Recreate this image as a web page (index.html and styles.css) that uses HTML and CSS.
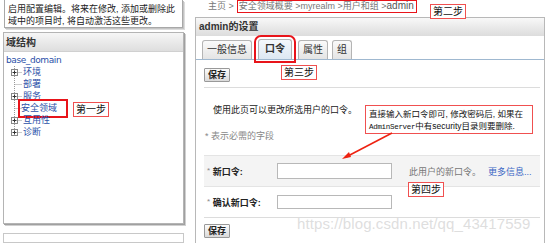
FILE: index.html
```html
<!DOCTYPE html>
<html lang="zh">
<head>
<meta charset="utf-8">
<link rel="stylesheet" href="styles.css">
</head>
<body>
<div class="page">
  <aside class="left">
    <div class="notice">启用配置编辑。将来在修改, 添加或删除此<br>域中的项目时, 将自动激活这些更改。</div>
    <div class="tree-panel">
      <div class="tp-head">域结构</div>
      <div class="tree">
        <div class="root">base_domain</div>
        <ul>
          <li><svg class="conn" width="15" height="12" viewBox="0 0 15 12"><path d="M7.5 0V12M7.5 6.5H15" stroke="#999" stroke-dasharray="1 1"/><rect x="4.5" y="3.5" width="6" height="6" fill="#fff" stroke="#888"/><path d="M5.5 6.5H9.5M7.5 4.5V8.5" stroke="#333"/></svg><a>环境</a></li>
          <li><svg class="conn" width="15" height="12" viewBox="0 0 15 12"><path d="M7.5 0V12M7.5 6.5H15" stroke="#999" stroke-dasharray="1 1"/></svg><a>部署</a></li>
          <li><svg class="conn" width="15" height="12" viewBox="0 0 15 12"><path d="M7.5 0V12M7.5 6.5H15" stroke="#999" stroke-dasharray="1 1"/><rect x="4.5" y="3.5" width="6" height="6" fill="#fff" stroke="#888"/><path d="M5.5 6.5H9.5M7.5 4.5V8.5" stroke="#333"/></svg><a>服务</a></li>
          <li><svg class="conn" width="15" height="12" viewBox="0 0 15 12"><path d="M7.5 0V12M7.5 6.5H15" stroke="#999" stroke-dasharray="1 1"/></svg><a class="mark">安全领域</a></li>
          <li><svg class="conn" width="15" height="12" viewBox="0 0 15 12"><path d="M7.5 0V12M7.5 6.5H15" stroke="#999" stroke-dasharray="1 1"/><rect x="4.5" y="3.5" width="6" height="6" fill="#fff" stroke="#888"/><path d="M5.5 6.5H9.5M7.5 4.5V8.5" stroke="#333"/></svg><a>互用性</a></li>
          <li><svg class="conn" width="15" height="12" viewBox="0 0 15 12"><path d="M7.5 0V6.5M7.5 6.5H15" stroke="#999" stroke-dasharray="1 1"/><rect x="4.5" y="3.5" width="6" height="6" fill="#fff" stroke="#888"/><path d="M5.5 6.5H9.5M7.5 4.5V8.5" stroke="#333"/></svg><a>诊断</a></li>
        </ul>
      </div>
    </div>
    <div class="next-panel"></div>
  </aside>

  <main class="right">
    <div class="crumbs">主页 &gt;<span class="crumb-mark">安全领域概要 &gt;myrealm &gt;用户和组 &gt;<b>admin</b></span></div>
    <section class="panel">
      <div class="p-head">admin的设置</div>
      <div class="tabs">
        <span class="tab">一般信息</span>
        <span class="tab active">口令</span>
        <span class="tab">属性</span>
        <span class="tab">组</span>
      </div>
      <div class="content">
        <div class="bar"><button class="btn">保存</button></div>
        <p class="desc">使用此页可以更改所选用户的口令。</p>
        <p class="req">* 表示必需的字段</p>
        <div class="form">
          <div class="row shade">
            <label class="lbl"><span class="ast">*</span> 新口令:</label>
            <span class="input"></span>
            <span class="help">此用户的新口令。</span>
            <a class="more">更多信息...</a>
          </div>
          <div class="row">
            <label class="lbl"><span class="ast">*</span> 确认新口令:</label>
            <span class="input small"></span>
          </div>
        </div>
        <div class="bar bottom"><button class="btn">保存</button></div>
      </div>
    </section>
  </main>

  <div class="step s1">第一步</div>
  <div class="step s2">第二步</div>
  <div class="step s3">第三步</div>
  <div class="step s4">第四步</div>
  <div class="note">直接输入新口令即可, 修改密码后, 如果在<br><span class="mono">AdminServer</span>中有security目录则要删除.</div>
  <svg class="arrow" width="550" height="243" viewBox="0 0 550 243"><path d="M392 133L346 157" stroke="#e21" stroke-width="1.5" fill="none"/><path d="M342 159L349 152L351 157Z" fill="#e21"/></svg>
  <div class="watermark">https://blog.csdn.net/qq_43417559</div>
</div>
</body>
</html>
```

FILE: styles.css
```css
* { box-sizing: border-box; }
html, body { margin: 0; padding: 0; background: #fff; }
body {
  font-family: "Liberation Sans", "Noto Sans CJK SC", sans-serif;
  font-size: 9px;
  color: #222;
}
.page {
  position: relative;
  width: 550px;
  height: 243px;
  overflow: hidden;
  display: flex;
}

/* left column */
.left {
  width: 186px;
  flex: none;
  display: flex;
  flex-direction: column;
}
.notice {
  margin: 0 3px 0 4px;
  height: 29px;
  border: 1px solid #a8a8a8;
  border-top: none;
  box-shadow: 1px 1px 0 #c4c4c4, 2px 2px 0 #dcdcdc;
  padding: 3px 3px 0;
  line-height: 12px;
  color: #222;
  white-space: nowrap;
}
.tree-panel {
  margin: 4px 2px 0 3px;
  height: 200px;
  border: 1px solid #b4b4b4;
  box-shadow: 1px 1px 0 #a0a0a0, 2px 2px 0 #d0d0d0;
}
.tp-head {
  height: 19px;
  line-height: 19px;
  padding-left: 2px;
  font-size: 10px;
  font-weight: bold;
  color: #333;
  background: linear-gradient(#f6f6f6, #dedede);
  border-bottom: 1px solid #d0d0d0;
}
.tree { padding: 2px 0 0 2px; }
.root {
  line-height: 12px;
  color: #2b50a8;
  font-family: "DejaVu Sans", sans-serif;
  font-size: 9px;
  letter-spacing: -0.4px;
}
.tree ul { list-style: none; margin: 0; padding: 0 0 0 1px; }
.tree li {
  display: flex;
  align-items: center;
  height: 12px;
  line-height: 12px;
}
.conn { flex: none; }
.tree a { color: #2b50a8; padding-left: 1px; }
.tree a.mark {
  outline: 2px solid #e8141a;
  outline-offset: 1px;
  padding: 0 8px 0 0;
  margin-left: -1px;
  height: 13px;
}
.next-panel {
  margin: 9px 2px 0 3px;
  height: 10px;
  border: 1px solid #c8c8c8;
}

/* right column */
.right {
  width: 350px;
  margin-left: 9px;
  flex: none;
  display: flex;
  flex-direction: column;
}
.crumbs {
  height: 17px;
  padding-left: 13px;
  color: #777;
  line-height: 12px;
  white-space: nowrap;
}
.crumb-mark {
  display: inline-block;
  margin-left: 3px;
  height: 13px;
  border: 1.5px solid #e8141a;
  padding: 0 2px 0 1px;
  line-height: 10px;
  color: #777;
}
.crumb-mark b { color: #555; font-weight: normal; font-size: 10px; }
.panel {
  flex: 1;
  border: 1px solid #b8b8b8;
  border-bottom: none;
  display: flex;
  flex-direction: column;
}
.p-head {
  height: 18px;
  line-height: 18px;
  padding-left: 3px;
  font-size: 10px;
  font-weight: bold;
  color: #333;
  background: linear-gradient(#f8f8f8, #dcdcdc);
}
.tabs {
  margin-top: 3px;
  height: 21px;
  padding-left: 6px;
  display: flex;
  align-items: flex-end;
  gap: 4px;
  border-bottom: 1px solid #9fb8d0;
}
.tab {
  height: 19px;
  line-height: 17px;
  padding: 0 4px;
  border: 1px solid #b4b4b4;
  border-bottom: none;
  border-radius: 3px 3px 0 0;
  background: linear-gradient(#fafafa, #e4e4e4);
  font-size: 10px;
  color: #333;
}
.tab.active {
  height: 20px;
  font-weight: bold;
  background: linear-gradient(#f4f8fc, #dde8f2);
  outline: 2px solid #e8141a;
  outline-offset: 2px;
  margin: 0 2px;
  padding: 0 6px;
}
.content {
  padding: 0 4px 0 8px;
  display: flex;
  flex-direction: column;
}
.bar {
  padding: 8px 0 5px;
  border-bottom: 1px solid #dcdcdc;
}
.bar.bottom { border-bottom: none; border-top: 1px solid #dcdcdc; padding-top: 6px; }
.btn {
  display: block;
  margin: 0;
  height: 14px;
  padding: 0 3px;
  font: bold 9px "Liberation Sans", "Noto Sans CJK SC", sans-serif;
  color: #222;
  border: 1px solid #999;
  border-radius: 1px;
  background: linear-gradient(#fbfbfb, #dadada);
  line-height: 12px;
}
.desc { margin: 16px 0 0 9px; line-height: 12px; color: #222; }
.req { margin: 14px 0 0 1px; line-height: 12px; color: #888; }
.form { margin-top: 13px; }
.row {
  height: 31px;
  display: flex;
  align-items: center;
  border-top: 1px solid #e4e4e4;
}
.row.shade { background: #f4f4f4; }
.lbl {
  width: 73px;
  padding-left: 3px;
  font-weight: bold;
  color: #222;
}
.ast { color: #888; font-weight: normal; font-size: 8px; vertical-align: 2px; }
.input {
  width: 115px;
  height: 16px;
  border: 1px solid #b8b8b8;
  background: #fff;
}
.input.small { height: 14px; }
.help { margin-left: 17px; color: #777; width: 79px; }
.more { color: #3a66c4; }

/* annotations */
.step {
  position: absolute;
  height: 15px;
  line-height: 13px;
  padding: 0 2px;
  border: 1px solid #f05050;
  background: #fff;
  color: #111;
  font-size: 10px;
}
.s1 { left: 73px; top: 102px; }
.s2 { left: 430px; top: 4px; }
.s3 { left: 281px; top: 65px; }
.s4 { left: 408px; top: 182px; }
.note {
  position: absolute;
  left: 365px;
  top: 105px;
  width: 168px;
  height: 29px;
  padding: 2px 2px 0 3px;
  border: 1px solid #f05050;
  background: #fff;
  line-height: 12px;
  font-size: 8.5px;
  color: #111;
  white-space: nowrap;
}
.mono { font-family: "Liberation Mono", monospace; font-size: 7.5px; letter-spacing: -0.3px; }
.arrow { position: absolute; left: 0; top: 0; pointer-events: none; }
.watermark {
  position: absolute;
  left: 297px;
  top: 215px;
  font-family: "Liberation Sans", sans-serif;
  font-size: 15px;
  color: rgba(200,200,200,0.6);
  letter-spacing: 0.1px;
  white-space: nowrap;
}
```
